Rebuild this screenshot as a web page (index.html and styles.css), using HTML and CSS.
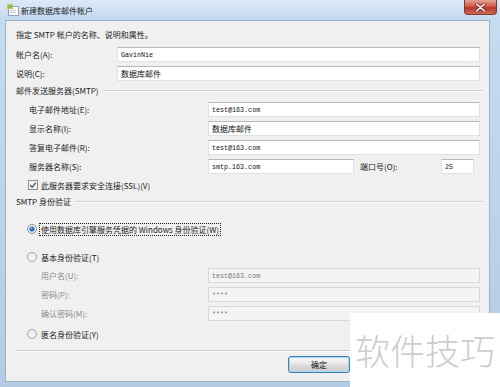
FILE: index.html
```html
<!DOCTYPE html>
<html lang="zh-CN">
<head>
  <meta charset="UTF-8" />
  <title>新建数据库邮件帐户</title>
  <link rel="stylesheet" href="styles.css">
</head>
<body>
  <div class="window">
    <!-- title bar -->
    <div class="titlebar">
      <svg class="app-icon" width="12" height="12" viewBox="0 0 12 12">
        <rect x="1.5" y="2.5" width="10" height="9" fill="#fbfbfb" stroke="#97a2ae"/>
        <rect x="0" y="0" width="6" height="5" fill="#c8c352"/>
        <rect x="1" y="1" width="4" height="3" fill="#8fbf5a"/>
        <rect x="3" y="6" width="6" height="1" fill="#c4ccd6"/>
        <rect x="3" y="8" width="6" height="1" fill="#c4ccd6"/>
      </svg>
      <span class="title">新建数据库邮件帐户</span>
      <div class="close-btn">
        <svg width="11" height="9" viewBox="0 0 11 9">
          <path d="M1.5 1 L9.5 8 M9.5 1 L1.5 8" stroke="#6a2a24" stroke-width="3" stroke-linecap="round"/>
          <path d="M1.5 1 L9.5 8 M9.5 1 L1.5 8" stroke="#ffffff" stroke-width="1.6" stroke-linecap="round"/>
        </svg>
      </div>
    </div>

    <div class="frame">
      <div class="client">
        <p class="intro">指定 SMTP 帐户的名称、说明和属性。</p>

        <div class="row row-account">
          <label class="lbl lbl-top">帐户名(A):</label>
          <input class="txt txt-top mono" value="GavinNie">
        </div>
        <div class="row row-desc">
          <label class="lbl lbl-top">说明(C):</label>
          <input class="txt txt-top cjk" value="数据库邮件">
        </div>

        <!-- outgoing mail server -->
        <div class="group-head head-smtp">
          <span>邮件发送服务器(SMTP)</span>
          <span class="group-line"></span>
        </div>
        <div class="row row-first indent">
          <label class="lbl lbl-grp">电子邮件地址(E):</label>
          <input class="txt txt-grp mono" value="test@163.com">
        </div>
        <div class="row row-next indent">
          <label class="lbl lbl-grp">显示名称(I):</label>
          <input class="txt txt-grp cjk" value="数据库邮件">
        </div>
        <div class="row row-next indent">
          <label class="lbl lbl-grp">答复电子邮件(R):</label>
          <input class="txt txt-grp mono" value="test@163.com">
        </div>
        <div class="row row-next indent">
          <label class="lbl lbl-grp">服务器名称(S):</label>
          <input class="txt txt-server mono" value="smtp.163.com">
          <label class="lbl lbl-port">端口号(O):</label>
          <input class="txt txt-port mono" value="25">
        </div>
        <div class="check-row">
          <svg width="10" height="10" viewBox="0 0 10 10">
            <rect x="0.5" y="0.5" width="9" height="9" fill="#f3f3f3" stroke="#8e9297"/>
            <path d="M2.2 5 L4.1 7.1 L7.9 2.6" fill="none" stroke="#4b5c78" stroke-width="1.4"/>
          </svg>
          <span>此服务器要求安全连接(SSL)(V)</span>
        </div>

        <!-- authentication -->
        <div class="group-head head-auth">
          <span>SMTP 身份验证</span>
          <span class="group-line"></span>
        </div>
        <div class="radio-row radio-win">
          <svg width="10" height="10" viewBox="0 0 10 10">
            <circle cx="5" cy="5" r="4.5" fill="#eef1f4" stroke="#8e9297"/>
            <circle cx="5" cy="5" r="2.6" fill="#2f6fb8"/>
            <circle cx="4.4" cy="4.3" r="1" fill="#7fb2e6"/>
          </svg>
          <span class="focus">使用数据库引擎服务凭据的 Windows 身份验证(W)</span>
        </div>
        <div class="radio-row radio-basic">
          <svg width="10" height="10" viewBox="0 0 10 10">
            <circle cx="5" cy="5" r="4.5" fill="#eef0f2" stroke="#a0a4a9"/>
          </svg>
          <span>基本身份验证(T)</span>
        </div>
        <div class="row row-sub-first sub">
          <label class="lbl lbl-sub">用户名(U):</label>
          <input class="txt txt-grp mono" value="test@163.com" disabled>
        </div>
        <div class="row row-next sub">
          <label class="lbl lbl-sub">密码(P):</label>
          <input class="txt txt-grp mono" value="****" disabled>
        </div>
        <div class="row row-next sub">
          <label class="lbl lbl-sub">确认密码(M):</label>
          <input class="txt txt-grp mono" value="****" disabled>
        </div>
        <div class="radio-row radio-anon">
          <svg width="10" height="10" viewBox="0 0 10 10">
            <circle cx="5" cy="5" r="4.5" fill="#eef0f2" stroke="#a0a4a9"/>
          </svg>
          <span>匿名身份验证(Y)</span>
        </div>

        <div class="separator"></div>

        <div class="buttons">
          <button class="btn btn-default">确定</button>
        </div>
      </div>
    </div>
  </div>

  <!-- watermark pasted over the corner -->
  <div class="watermark">软件技巧</div>
</body>
</html>
```

FILE: styles.css
```css
* { box-sizing: border-box; }
html, body { margin: 0; padding: 0; }
body {
  width: 500px;
  height: 387px;
  overflow: hidden;
  position: relative;
  font-family: "Noto Sans CJK SC", "Liberation Sans", sans-serif;
  font-size: 8px;
  color: #1b1b1b;
  background: #b8cfe7;
}
.window {
  height: 387px;
  display: flex;
  flex-direction: column;
}
.titlebar {
  height: 20px;
  display: flex;
  align-items: center;
  padding: 0 3px 0 7px;
  background: linear-gradient(#dbe9f8, #c3d9f0);
}
.app-icon { flex: none; margin-top: -1px; }
.title {
  margin-left: 2px;
  font-size: 8px;
  color: #1a1a1a;
}
.close-btn {
  margin-left: auto;
  align-self: flex-start;
  width: 33px;
  height: 15px;
  display: flex;
  align-items: center;
  justify-content: center;
  border: 1px solid #85372f;
  border-top: none;
  border-radius: 0 0 4px 4px;
  background: linear-gradient(#e3a195, #cf5c4c 45%, #b7362a 55%, #cf6a55);
}
.frame {
  flex: 1;
  display: flex;
  padding: 0 10px 5px 5px;
  background: linear-gradient(#c6dbf0, #b3cbe5);
}
.client {
  flex: 1;
  background: #f0f0f0;
  border: 1px solid #9db0c6;
  padding: 7px 8px 0 10px;
}
.intro {
  margin: 0;
  height: 14px;
  line-height: 14px;
}
.row {
  display: flex;
  align-items: center;
  height: 15px;
}
.row-account { margin-top: 5px; }
.row-desc { margin-top: 4px; }
.row-first { margin-top: 6px; }
.row-next { margin-top: 4px; }
.row-sub-first { margin-top: 4px; }
.indent { padding-left: 13px; }
.sub { padding-left: 25px; }
.lbl { flex: none; white-space: nowrap; }
.lbl-top { width: 101px; }
.lbl-grp { width: 179px; }
.lbl-sub { width: 167px; color: #8a8a8a; }
.lbl-port { width: 87px; padding-left: 6px; }
.txt {
  height: 15px;
  padding: 0 3px;
  border: 1px solid #dde2e8;
  border-top-color: #b5b9bf;
  background: #fff;
  color: #111;
  outline: none;
}
.txt:disabled {
  background: #f4f4f4;
  border-color: #d8d8d8;
  color: #7a7a7a;
}
.mono { font-family: "Liberation Mono", monospace; font-size: 6.7px; }
.cjk { font-family: "Noto Sans CJK SC", sans-serif; font-size: 8px; }
.txt-top { width: 363px; }
.txt-grp { width: 272px; }
.txt-server { width: 146px; }
.txt-port { width: 33px; }

.group-head {
  height: 12px;
  display: flex;
  align-items: center;
}
.head-smtp { margin-top: 3px; }
.head-auth { margin-top: 4px; }
.group-line {
  flex: 1;
  margin: 1px -2px 0 4px;
  height: 2px;
  border-top: 1px solid #d3d3d3;
  border-bottom: 1px solid #fcfcfc;
}
.check-row {
  margin-top: 5px;
  height: 12px;
  display: flex;
  align-items: center;
  gap: 3px;
  padding-left: 12px;
}
.radio-row {
  height: 14px;
  display: flex;
  align-items: center;
  gap: 2px;
  padding-left: 11px;
}
.radio-win { margin-top: 15px; }
.radio-basic { margin-top: 14px; gap: 4px; }
.radio-anon { margin-top: 6px; gap: 4px; }
.focus {
  border: 1px dotted #222;
  padding: 0 1px;
  line-height: 11px;
}
.separator {
  margin: 9px -2px 0 0;
  height: 2px;
  border-top: 1px solid #c9c9c9;
  border-bottom: 1px solid #fdfdfd;
}
.buttons {
  margin-top: 4px;
  display: flex;
  padding-left: 272px;
}
.btn {
  width: 62px;
  height: 17px;
  padding: 0;
  font-family: "Noto Sans CJK SC", sans-serif;
  font-size: 8px;
  color: #111;
  border: 1px solid #707070;
  border-radius: 3px;
  background: linear-gradient(#f6f6f6, #e9e9e9 48%, #dcdcdc 52%, #cfcfcf);
}
.btn-default {
  border-color: #3c7fb1;
  box-shadow: inset 0 0 0 1px #a8d7f3;
}
.watermark {
  position: absolute;
  left: 350px;
  top: 313px;
  width: 150px;
  height: 74px;
  background: #fff;
  display: flex;
  align-items: center;
  padding: 0 0 2px 5px;
  font-family: "Noto Sans CJK SC", sans-serif;
  font-size: 35px;
  font-weight: 300;
  color: #cdcdcd;
  white-space: nowrap;
}
```
